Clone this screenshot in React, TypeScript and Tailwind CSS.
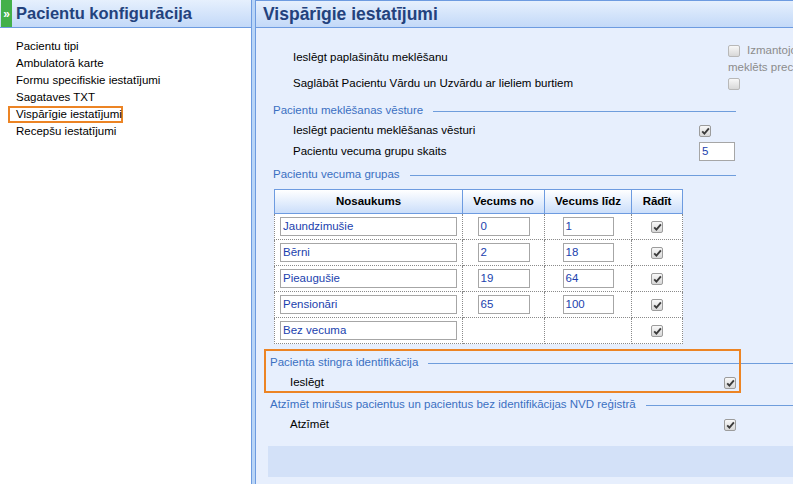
import React from 'react';

interface AgeGroup {
  name: string;
  from: string;
  to: string;
  show: boolean;
}

const groups: AgeGroup[] = [
  { name: 'Jaundzimušie', from: '0', to: '1', show: true },
  { name: 'Bērni', from: '2', to: '18', show: true },
  { name: 'Pieaugušie', from: '19', to: '64', show: true },
  { name: 'Pensionāri', from: '65', to: '100', show: true },
  { name: 'Bez vecuma', from: '', to: '', show: true },
];

const menu = [
  'Pacientu tipi',
  'Ambulatorā karte',
  'Formu specifiskie iestatījumi',
  'Sagataves TXT',
  'Vispārīgie iestatījumi',
  'Recepšu iestatījumi',
];

function Check({ checked, disabled }: { checked?: boolean; disabled?: boolean }) {
  return (
    <span
      className={
        'inline-flex h-[12px] w-[12px] shrink-0 items-center justify-center rounded-[2px] border bg-gradient-to-b from-[#f8f8f8] to-[#d8d8d8] align-middle ' +
        (disabled ? 'border-[#b8b8b8]' : 'border-[#9c9c9c]')
      }
    >
      {checked && (
        <svg width="9" height="8" viewBox="0 0 9 8">
          <path d="M1.2 4.4 L3.4 6.6 L7.9 1.3" stroke="#3b3b3b" strokeWidth="1.9" fill="none" />
        </svg>
      )}
    </span>
  );
}

function Legend({ title, className }: { title: string; className?: string }) {
  return (
    <div className={'flex h-[16px] items-center ' + (className ?? '')}>
      <span className="whitespace-nowrap text-[#3b6fc2]">{title}</span>
      <span className="ml-[10px] flex-1 border-t border-[#6f9ddc]" />
    </div>
  );
}

function TextBox({ value, className }: { value: string; className?: string }) {
  return (
    <div
      className={
        'h-[19px] border border-[#a6a6a6] bg-white pl-[2px] leading-[17px] text-[#1b3fae] ' + (className ?? '')
      }
    >
      {value}
    </div>
  );
}

export default function App() {
  return (
    <div
      className="flex h-[484px] w-[793px] overflow-hidden bg-white text-[11.5px] text-black"
      style={{ fontFamily: '"Liberation Sans", Arial, sans-serif' }}
    >
      {/* kreisais panelis */}
      <div className="flex w-[252px] shrink-0 flex-col border-r border-[#6d9be0] bg-white">
        <div className="flex h-[28px] items-stretch border-b border-[#6d9be0] bg-gradient-to-b from-[#e6f0fd] to-[#c3d9f8]">
          <div className="ml-[1px] flex w-[11px] items-center justify-center bg-[#43b04a] text-[12px] font-bold leading-none text-white">
            »
          </div>
          <div className="flex items-center pl-[4px] text-[16.5px] font-bold text-[#23427d]">
            Pacientu konfigurācija
          </div>
        </div>
        <ul className="whitespace-nowrap pl-[16px] pt-[10px] leading-[17px]">
          {menu.map((m) =>
            m === 'Vispārīgie iestatījumi' ? (
              <li key={m}>
                <span className="-ml-[8px] block h-[17px] w-[115px] border-2 border-[#ec8424] pl-[6px] leading-[13px]">
                  {m}
                </span>
              </li>
            ) : (
              <li key={m} className="h-[17px]">
                {m}
              </li>
            )
          )}
        </ul>
      </div>

      <div className="w-[4px] shrink-0 border-r border-[#6d9be0] bg-[#b9d5f7]" />

      {/* labais panelis */}
      <div className="relative flex min-w-0 flex-1 flex-col overflow-hidden border-t border-[#6d9be0] bg-[#e7effd]">
        <div className="flex h-[27px] shrink-0 items-center border-b border-[#6d9be0] bg-gradient-to-b from-[#e6f0fd] to-[#c3d9f8] pl-[7px] text-[17.5px] font-bold text-[#23427d]">
          Vispārīgie iestatījumi
        </div>

        <div className="w-[800px] pt-[15px]">
          <div className="flex h-[30px]">
            <div className="flex w-[472px] items-center pl-[37px]">Ieslēgt paplašinātu meklēšanu</div>
            <div className="-mt-[1px] whitespace-nowrap leading-[17px] text-[#8c8c8c]">
              <Check disabled />
              <span className="ml-[7px]">Izmantojot paplašināto meklēšanu, pacients tiek</span>
              <br />
              meklēts precīzi pēc ievadītajiem datiem
            </div>
          </div>
          <div className="flex h-[22px] items-center">
            <div className="w-[472px] pl-[37px]">Saglābāt Pacientu Vārdu un Uzvārdu ar lieliem burtiem</div>
            <Check disabled />
          </div>

          <div className="w-[480px] pl-[17px]">
            <Legend title="Pacientu meklēšanas vēsture" className="mt-[8px]" />
            <div className="mt-[3px] flex h-[18px] items-center">
              <div className="w-[426px] pl-[20px]">Ieslēgt pacientu meklēšanas vēsturi</div>
              <Check checked />
            </div>
            <div className="mt-[1px] flex h-[21px] items-center">
              <div className="w-[426px] pl-[20px]">Pacientu vecuma grupu skaits</div>
              <TextBox value="5" className="w-[36px]" />
            </div>
            <Legend title="Pacientu vecuma grupas" className="mt-[5px]" />
          </div>

          <table className="ml-[18px] mt-[6px] border-collapse bg-white">
            <thead>
              <tr className="h-[24px] bg-gradient-to-b from-white to-[#c9ddfa]">
                <th className="w-[188px] border border-[#6d9be0] p-0 pt-[1px] font-bold">Nosaukums</th>
                <th className="w-[82px] border border-[#6d9be0] p-0 pt-[1px] font-bold">Vecums no</th>
                <th className="w-[87px] border border-[#6d9be0] p-0 pt-[1px] font-bold">Vecums līdz</th>
                <th className="w-[51px] border border-[#6d9be0] p-0 pt-[1px] font-bold">Rādīt</th>
              </tr>
            </thead>
            <tbody>
              {groups.map((g) => (
                <tr key={g.name} className="h-[26px]">
                  <td className="border border-dotted border-[#8a8a8a] px-[5px] py-0">
                    <TextBox value={g.name} className="w-[177px]" />
                  </td>
                  <td className="border border-dotted border-[#8a8a8a] p-0">
                    {g.from && <TextBox value={g.from} className="mx-auto w-[52px]" />}
                  </td>
                  <td className="border border-dotted border-[#8a8a8a] p-0">
                    {g.to && <TextBox value={g.to} className="mx-auto w-[51px]" />}
                  </td>
                  <td className="border border-dotted border-[#8a8a8a] p-0 text-center">
                    <Check checked={g.show} />
                  </td>
                </tr>
              ))}
            </tbody>
          </table>

          <div className="pl-[14px]">
            <Legend title="Pacienta stingra identifikācija" className="mt-[11px]" />
            <div className="mt-[3px] flex h-[18px] items-center">
              <div className="w-[454px] pl-[20px]">Ieslēgt</div>
              <Check checked />
            </div>
            <Legend
              title="Atzīmēt mirušus pacientus un pacientus bez identifikācijas NVD reģistrā"
              className="mt-[5px]"
            />
            <div className="mt-[3px] flex h-[18px] items-center">
              <div className="w-[454px] pl-[20px]">Atzīmēt</div>
              <Check checked />
            </div>
          </div>

          <div className="ml-[12px] mt-[12px] h-[31px] bg-[#d3e1f8]" />
        </div>

        {/* iezīmējums */}
        <div className="pointer-events-none absolute left-[8px] top-[348px] h-[44px] w-[477px] border-2 border-[#ec8424]" />
      </div>
    </div>
  );
}
